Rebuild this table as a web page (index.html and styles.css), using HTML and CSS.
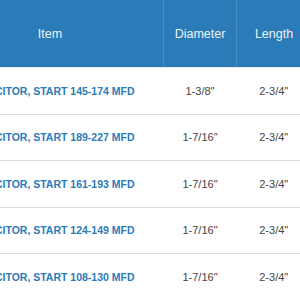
FILE: index.html
```html
<!DOCTYPE html>
<html>
<head>
<meta charset="utf-8">
<link rel="stylesheet" href="styles.css">
</head>
<body>
<div class="viewport">
  <table class="parts">
    <thead>
      <tr>
        <th class="col-item">Item</th>
        <th class="col-dia">Diameter</th>
        <th class="col-len">Length</th>
      </tr>
    </thead>
    <tbody>
      <tr><td class="item"><a>CAPACITOR, START 145-174 MFD</a></td><td>1-3/8"</td><td>2-3/4"</td></tr>
      <tr><td class="item"><a>CAPACITOR, START 189-227 MFD</a></td><td>1-7/16"</td><td>2-3/4"</td></tr>
      <tr><td class="item"><a>CAPACITOR, START 161-193 MFD</a></td><td>1-7/16"</td><td>2-3/4"</td></tr>
      <tr><td class="item"><a>CAPACITOR, START 124-149 MFD</a></td><td>1-7/16"</td><td>2-3/4"</td></tr>
      <tr><td class="item"><a>CAPACITOR, START 108-130 MFD</a></td><td>1-7/16"</td><td>2-3/4"</td></tr>
    </tbody>
  </table>
</div>
</body>
</html>
```

FILE: styles.css
```css
html, body {
  margin: 0;
  padding: 0;
  background: #fff;
}
.viewport {
  width: 300px;
  height: 300px;
  overflow: hidden;
}
.parts {
  margin-left: -63px;
  border-collapse: collapse;
  table-layout: fixed;
  width: 372px;
  font-family: "Liberation Sans", Arial, sans-serif;
}
.col-item { width: 226px; }
.col-dia { width: 72px; }
.col-len { width: 74px; }
.parts th {
  background: #2a7bb8;
  color: #eef4fa;
  font-weight: normal;
  font-size: 12.5px;
  height: 67px;
  padding: 0;
  text-align: center;
  border-left: 1px solid #4a8fc4;
  border-bottom: 1px solid #e6e6e6;
}
.parts th:first-child { border-left: none; }
.parts td {
  height: 45.5px;
  padding: 0;
  text-align: center;
  font-size: 11px;
  color: #444;
  border-bottom: 1px solid #dcdcdc;
}
.parts td.item a {
  color: #2a7bb8;
  font-weight: bold;
  font-size: 10.5px;
  white-space: nowrap;
}
```
